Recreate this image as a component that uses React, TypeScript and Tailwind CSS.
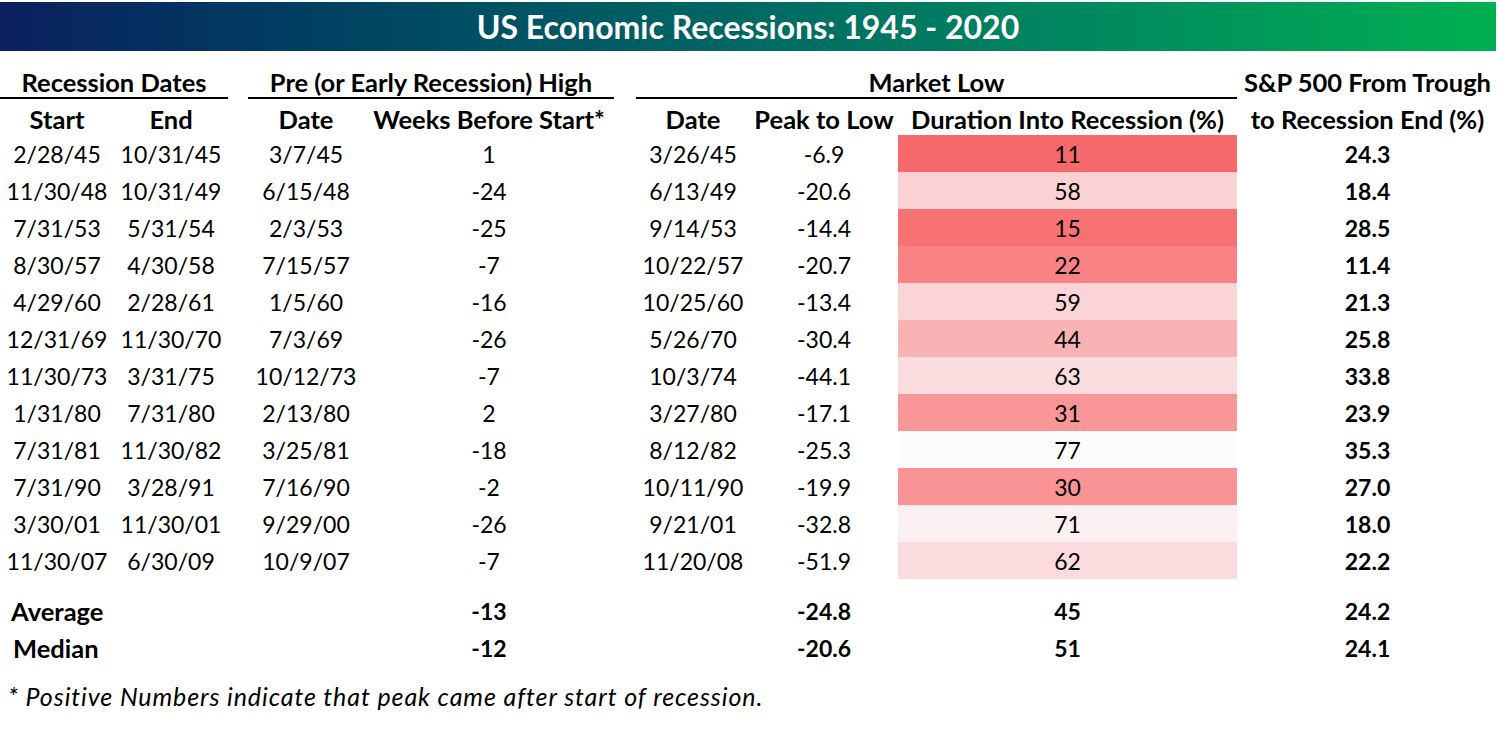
import React from 'react'

type Row = {
  start: string
  end: string
  preDate: string
  weeks: string
  lowDate: string
  peakToLow: string
  duration: number
  sp: string
}

const rows: Row[] = [
  { start: '2/28/45', end: '10/31/45', preDate: '3/7/45', weeks: '1', lowDate: '3/26/45', peakToLow: '-6.9', duration: 11, sp: '24.3' },
  { start: '11/30/48', end: '10/31/49', preDate: '6/15/48', weeks: '-24', lowDate: '6/13/49', peakToLow: '-20.6', duration: 58, sp: '18.4' },
  { start: '7/31/53', end: '5/31/54', preDate: '2/3/53', weeks: '-25', lowDate: '9/14/53', peakToLow: '-14.4', duration: 15, sp: '28.5' },
  { start: '8/30/57', end: '4/30/58', preDate: '7/15/57', weeks: '-7', lowDate: '10/22/57', peakToLow: '-20.7', duration: 22, sp: '11.4' },
  { start: '4/29/60', end: '2/28/61', preDate: '1/5/60', weeks: '-16', lowDate: '10/25/60', peakToLow: '-13.4', duration: 59, sp: '21.3' },
  { start: '12/31/69', end: '11/30/70', preDate: '7/3/69', weeks: '-26', lowDate: '5/26/70', peakToLow: '-30.4', duration: 44, sp: '25.8' },
  { start: '11/30/73', end: '3/31/75', preDate: '10/12/73', weeks: '-7', lowDate: '10/3/74', peakToLow: '-44.1', duration: 63, sp: '33.8' },
  { start: '1/31/80', end: '7/31/80', preDate: '2/13/80', weeks: '2', lowDate: '3/27/80', peakToLow: '-17.1', duration: 31, sp: '23.9' },
  { start: '7/31/81', end: '11/30/82', preDate: '3/25/81', weeks: '-18', lowDate: '8/12/82', peakToLow: '-25.3', duration: 77, sp: '35.3' },
  { start: '7/31/90', end: '3/28/91', preDate: '7/16/90', weeks: '-2', lowDate: '10/11/90', peakToLow: '-19.9', duration: 30, sp: '27.0' },
  { start: '3/30/01', end: '11/30/01', preDate: '9/29/00', weeks: '-26', lowDate: '9/21/01', peakToLow: '-32.8', duration: 71, sp: '18.0' },
  { start: '11/30/07', end: '6/30/09', preDate: '10/9/07', weeks: '-7', lowDate: '11/20/08', peakToLow: '-51.9', duration: 62, sp: '22.2' },
]

// excel style two colour scale, min red -> max white
function heat(v: number) {
  const t = (v - 11) / (77 - 11)
  const r = Math.round(248 + 4 * t)
  const g = Math.round(105 + 147 * t)
  const b = Math.round(107 + 148 * t)
  return `rgb(${r}, ${g}, ${b})`
}

const grid =
  'grid grid-cols-[114px_114px_20px_116px_250px_22px_114px_148px_339px_8px_245px]'

export default function App() {
  return (
    <div className="w-[1500px] h-[732px] bg-white text-black font-['Lato',sans-serif] text-[23px] overflow-hidden">
      <div className="pt-[2px] pr-[4px]">
        <div className="h-[49px] flex items-center justify-center bg-gradient-to-r from-[#0b1f5e] to-[#00b050]">
          <h1 className="text-white font-bold text-[32px] leading-none">
            US Economic Recessions: 1945 - 2020
          </h1>
        </div>
      </div>

      {/* group headers */}
      <div className={`${grid} h-[48px] font-bold text-[25.5px] whitespace-nowrap`}>
        <div className="col-span-2 flex items-end justify-center pb-[2px] border-b-2 border-black leading-[26px]">
          Recession Dates
        </div>
        <div />
        <div className="col-span-2 flex items-end justify-center pb-[2px] border-b-2 border-black leading-[26px]">
          Pre (or Early Recession) High
        </div>
        <div />
        <div className="col-span-3 flex items-end justify-center pb-[2px] border-b-2 border-black leading-[26px]">
          Market Low
        </div>
        <div />
        <div className="flex items-end justify-center pb-[4px] leading-[26px]">S&amp;P 500 From Trough</div>
      </div>

      {/* column headers */}
      <div className={`${grid} h-[36px] font-bold text-[25.5px] leading-[26px] items-center pt-[3px] whitespace-nowrap`}>
        <div className="text-center">Start</div>
        <div className="text-center">End</div>
        <div />
        <div className="text-center">Date</div>
        <div className="text-center">Weeks Before Start*</div>
        <div />
        <div className="text-center">Date</div>
        <div className="text-center">Peak to Low</div>
        <div className="text-center">Duration Into Recession (%)</div>
        <div />
        <div className="text-center">to Recession End (%)</div>
      </div>

      {rows.map((r) => (
        <div key={r.start} className={`${grid} h-[37px] items-center leading-[26px]`}>
          <div className="text-center">{r.start}</div>
          <div className="text-center">{r.end}</div>
          <div />
          <div className="text-center">{r.preDate}</div>
          <div className="text-center">{r.weeks}</div>
          <div />
          <div className="text-center">{r.lowDate}</div>
          <div className="text-center">{r.peakToLow}</div>
          <div className="h-full flex items-center justify-center" style={{ backgroundColor: heat(r.duration) }}>
            {r.duration}
          </div>
          <div />
          <div className="text-center font-bold">{r.sp}</div>
        </div>
      ))}

      <div className="mt-[13px] font-bold leading-[26px]">
        <div className={`${grid} h-[37px] items-center`}>
          <div className="col-span-2 pl-[11px] text-[25.5px]">Average</div>
          <div />
          <div />
          <div className="text-center">-13</div>
          <div />
          <div />
          <div className="text-center">-24.8</div>
          <div className="text-center">45</div>
          <div />
          <div className="text-center">24.2</div>
        </div>
        <div className={`${grid} h-[37px] items-center`}>
          <div className="col-span-2 pl-[13px] text-[25.5px]">Median</div>
          <div />
          <div />
          <div className="text-center">-12</div>
          <div />
          <div />
          <div className="text-center">-20.6</div>
          <div className="text-center">51</div>
          <div />
          <div className="text-center">24.1</div>
        </div>
      </div>

      <p className="mt-[17px] pl-[8px] italic text-[25px] tracking-[0.9px] leading-[26px] whitespace-nowrap">
        * Positive Numbers indicate that peak came after start of recession.
      </p>
    </div>
  )
}
